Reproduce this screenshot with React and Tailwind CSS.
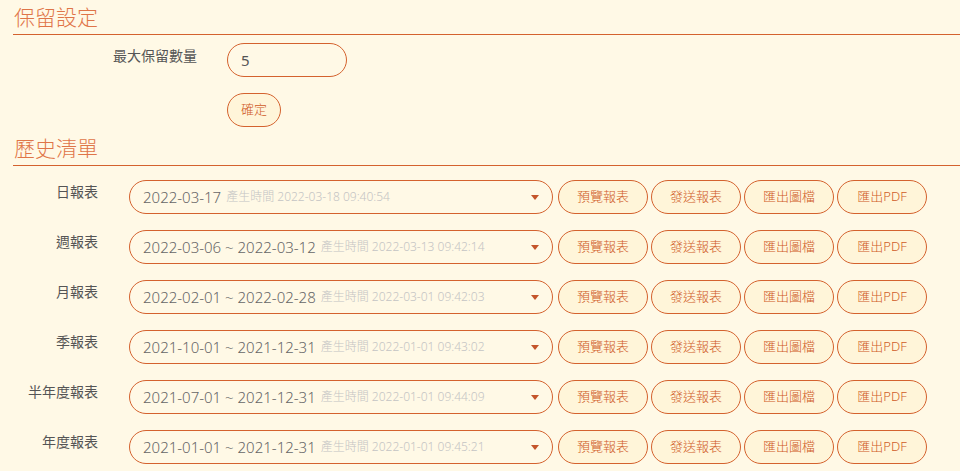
const font = { fontFamily: '"Noto Sans", "Noto Sans CJK TC", sans-serif' };

const reports = [
  { name: "日報表", range: "2022-03-17", made: "2022-03-18 09:40:54" },
  { name: "週報表", range: "2022-03-06 ~ 2022-03-12", made: "2022-03-13 09:42:14" },
  { name: "月報表", range: "2022-02-01 ~ 2022-02-28", made: "2022-03-01 09:42:03" },
  { name: "季報表", range: "2021-10-01 ~ 2021-12-31", made: "2022-01-01 09:43:02" },
  { name: "半年度報表", range: "2021-07-01 ~ 2021-12-31", made: "2022-01-01 09:44:09" },
  { name: "年度報表", range: "2021-01-01 ~ 2021-12-31", made: "2022-01-01 09:45:21" },
];

const actions = ["預覽報表", "發送報表", "匯出圖檔", "匯出PDF"];

function Heading({ children }) {
  return (
    <div className="ml-[13px] border-b border-[#d4622e] pl-[1px] pb-[2px]">
      <h2 className="text-[21px] leading-[29px] font-light text-[#df7548]">{children}</h2>
    </div>
  );
}

function PillButton({ children, className = "" }) {
  return (
    <button
      className={
        "h-[34px] rounded-full border border-[#d4622e] bg-[#fff5d9] text-[13px] font-light text-[#cf5a26] " +
        className
      }
    >
      {children}
    </button>
  );
}

function ReportRow({ r }) {
  return (
    <div className="flex items-start">
      <div className="w-[98px] pt-[2px] text-right text-[14px] leading-[20px] text-[#555]">{r.name}</div>
      <div className="ml-[31px] flex h-[34px] w-[424px] items-center rounded-full border border-[#d4622e] pl-[13px] pr-[13px]">
        <span className="text-[15px] font-light text-[#666]">{r.range}</span>
        <span className="ml-[5px] text-[12px] font-light text-[#c4c4c4]">產生時間 {r.made}</span>
        <svg className="ml-auto" width="8" height="5" viewBox="0 0 8 5">
          <path d="M0 0 L8 0 L4 5 Z" fill="#c4552a" />
        </svg>
      </div>
      <div className="ml-[5px] flex gap-[3px]">
        {actions.map((a) => (
          <PillButton key={a} className="w-[90px]">
            {a}
          </PillButton>
        ))}
      </div>
    </div>
  );
}

export default function App() {
  return (
    <div className="h-[471px] w-[960px] overflow-hidden bg-[#fff9e6] pt-[3px]" style={font}>
      <Heading>保留設定</Heading>
      <div className="mt-[8px] flex items-start">
        <div className="w-[197px] pt-[3px] text-right text-[14px] leading-[20px] text-[#555]">最大保留數量</div>
        <div className="ml-[30px] flex h-[34px] w-[120px] items-center rounded-full border border-[#d4622e] px-[13px] text-[15px] text-[#555]">
          5
        </div>
      </div>
      <div className="mt-[16px] pl-[227px]">
        <PillButton className="w-[54px]">確定</PillButton>
      </div>
      <div className="mt-[7px]">
        <Heading>歷史清單</Heading>
      </div>
      <div className="mt-[14px] flex flex-col gap-[16px]">
        {reports.map((r) => (
          <ReportRow key={r.name} r={r} />
        ))}
      </div>
    </div>
  );
}
